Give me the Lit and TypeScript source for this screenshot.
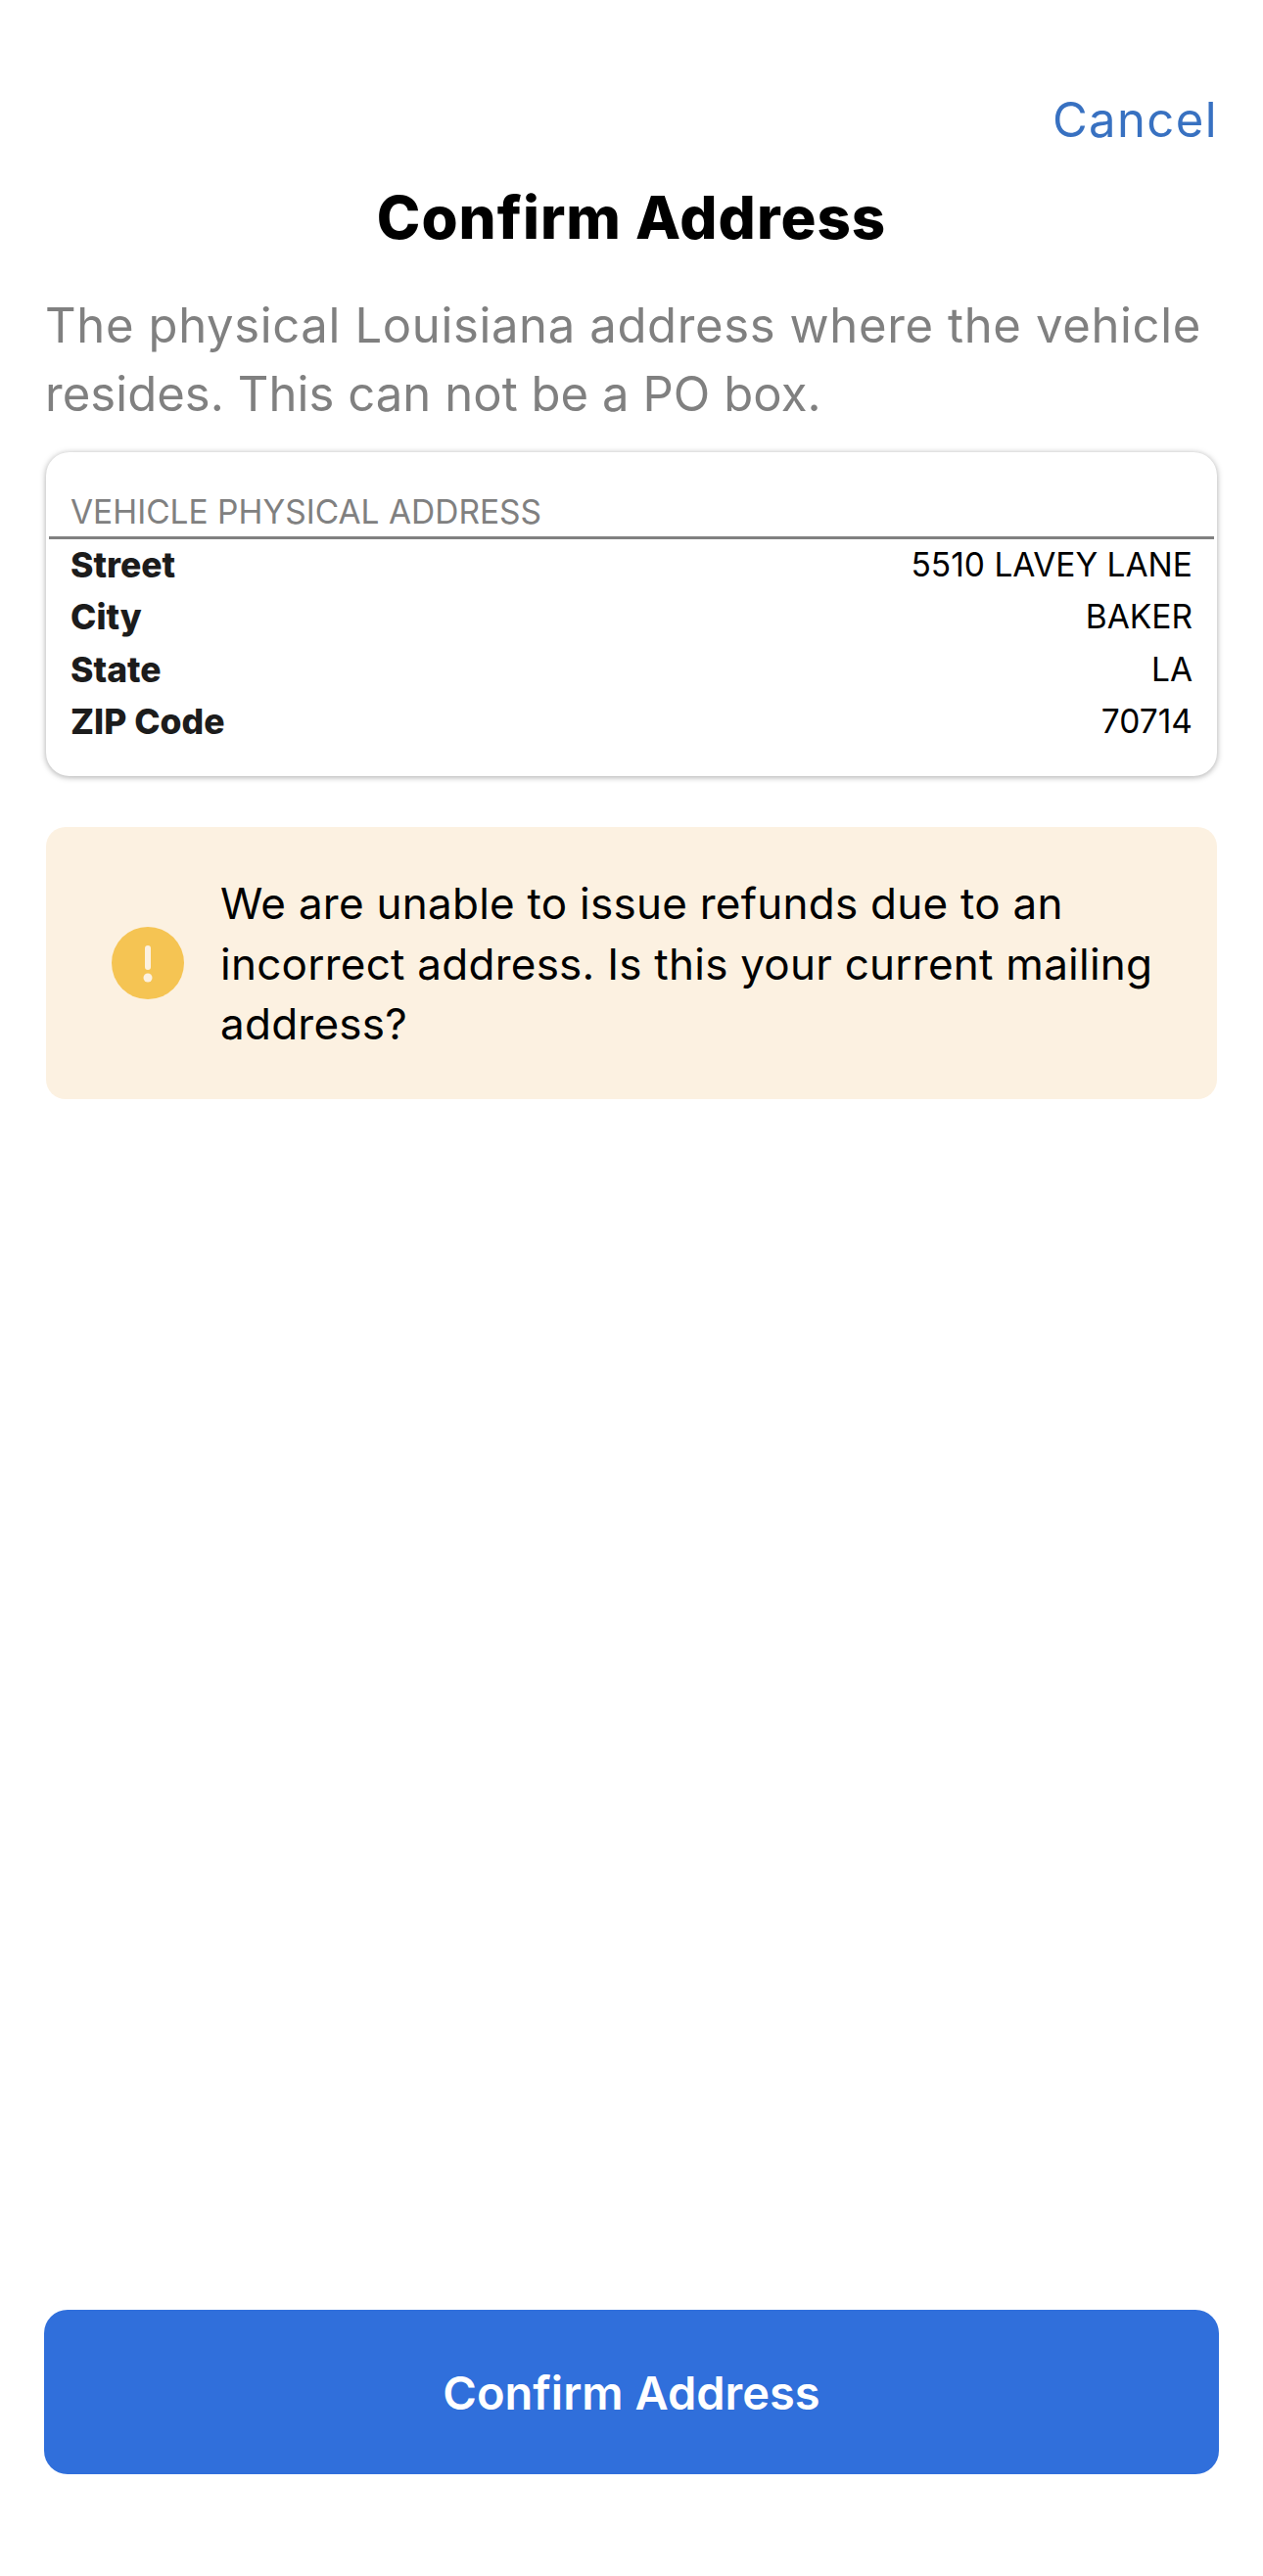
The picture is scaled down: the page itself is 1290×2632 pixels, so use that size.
import {html, css, LitElement} from 'lit';
import {customElement} from 'lit/decorators.js';

const rows = [
	['Street', '5510 LAVEY LANE'],
	['City', 'BAKER'],
	['State', 'LA'],
	['ZIP Code', '70714'],
];

@customElement('app-root')
export class AppRoot extends LitElement {
	static styles = css`
		* {
			box-sizing: border-box;
			margin: 0;
			padding: 0;
		}

		:host {
			display: block;
			background: #fff;
			font-family: Inter, "Noto Sans", sans-serif;
		}

		.page {
			display: flex;
			flex-direction: column;
			height: 2632px;
			padding: 93px 45px 104px 45px;
		}

		.cancel {
			align-self: flex-end;
			margin-right: 1px;
			font-size: 49px;
			line-height: 60px;
			color: #3871c1;
			letter-spacing: 1.4px;
		}

		.title {
			margin-top: 25px;
			text-align: center;
			font-size: 60px;
			line-height: 88px;
			font-weight: 800;
			color: #000;
			letter-spacing: 1px;
		}

		.intro {
			margin: 32px 1px 0 1px;
			font-size: 49px;
			line-height: 70px;
			color: #808080;
		}

		.intro span {
			display: block;
		}

		.intro .first {
			letter-spacing: 0.64px;
		}

		.intro .second {
			letter-spacing: 0.06px;
		}

		.card {
			margin: 24px 2px 0 2px;
			height: 331px;
			padding: 36px 3px 0 3px;
			background: #fff;
			border-radius: 24px;
			box-shadow: 0 1px 6px rgba(0, 0, 0, 0.35);
		}

		.card-title {
			padding: 0 22px;
			font-size: 33.5px;
			line-height: 50px;
			color: #808080;
			border-bottom: 3px solid #808080;
		}

		.row {
			display: flex;
			justify-content: space-between;
			padding: 0 22px;
			font-size: 33.5px;
			line-height: 53.3px;
		}

		.row b {
			font-size: 35.5px;
			font-weight: 800;
			color: #1c1c1c;
		}

		.row span {
			color: #000;
		}

		.alert {
			display: flex;
			align-items: center;
			gap: 37px;
			margin: 52px 2px 0 2px;
			height: 278px;
			padding: 0 40px 0 67px;
			background: #fcf1e1;
			border-radius: 20px;
			font-size: 44px;
			line-height: 61.5px;
			letter-spacing: 0.25px;
			color: #000;
		}

		.alert svg {
			flex: none;
			width: 74px;
			height: 74px;
		}

		.alert div {
			padding-top: 3px;
		}

		.confirm {
			margin-top: auto;
			height: 168px;
			border: none;
			border-radius: 24px;
			background: #306fdb;
			color: #fff;
			font: 600 47px Inter, "Noto Sans", sans-serif;
		}
	`;

	render() {
		return html`
			<div class="page">
				<div class="cancel">Cancel</div>
				<h1 class="title">Confirm Address</h1>
				<p class="intro">
					<span class="first">The physical Louisiana address where the vehicle</span>
					<span class="second">resides. This can not be a PO box.</span>
				</p>
				<section class="card">
					<div class="card-title">VEHICLE PHYSICAL ADDRESS</div>
					${rows.map(([k, v]) => html`<div class="row"><b>${k}</b><span>${v}</span></div>`)}
				</section>
				<div class="alert">
					<svg viewBox="0 0 74 74">
						<circle cx="37" cy="37" r="37" fill="#f5c453"/>
						<rect x="34" y="19" width="6" height="25" rx="3" fill="#fcf1e1"/>
						<circle cx="37" cy="52" r="4.5" fill="#fcf1e1"/>
					</svg>
					<div>We are unable to issue refunds due to an incorrect address. Is this your current mailing address?</div>
				</div>
				<button class="confirm">Confirm Address</button>
			</div>
		`;
	}
}
